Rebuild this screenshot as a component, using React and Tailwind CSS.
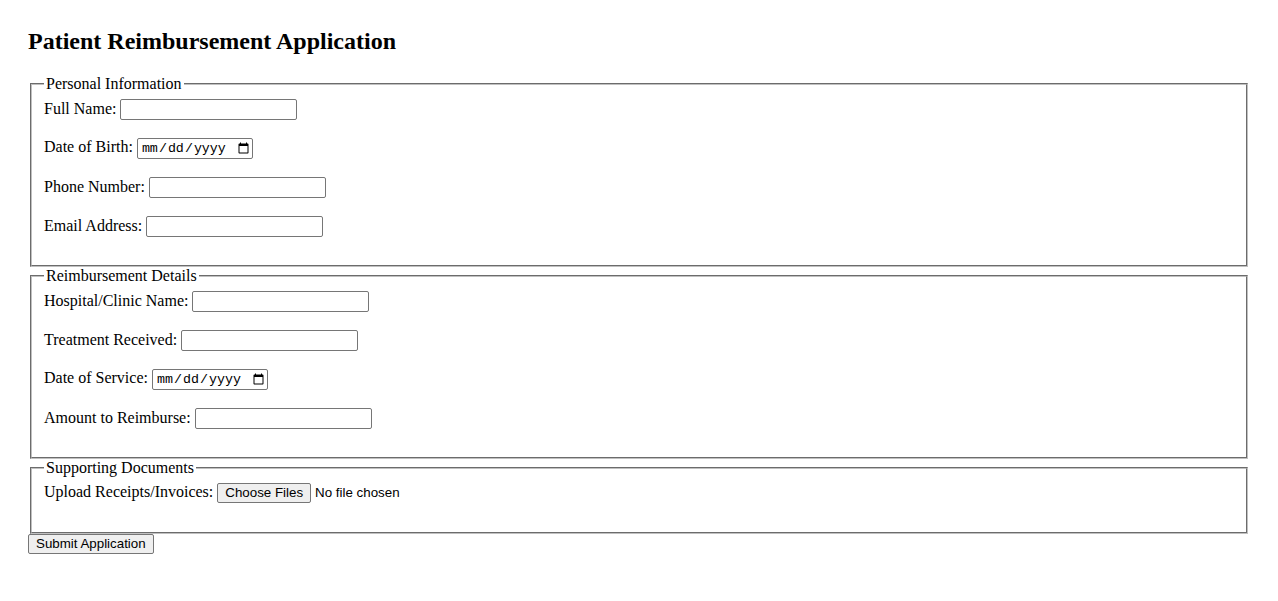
import React from "react";

function Section({ legend, children }) {
  return (
    <fieldset className="mx-[2px] border-2 [border-style:groove] border-[#c0c0c0] px-[12px] pt-[6px] pb-[10px]">
      <legend className="px-[2px] leading-[normal]">{legend}</legend>
      {children}
    </fieldset>
  );
}

function Row({ label, children }) {
  return (
    <div className="flex items-baseline gap-[4px] h-[21px] mb-[18px]">
      <label className="whitespace-nowrap leading-[normal]">{label}</label>
      {children}
    </div>
  );
}

function TextInput() {
  return (
    <input
      type="text"
      className="w-[177px] h-[21px] border border-[#767676] rounded-[2px] px-[2px] bg-white font-['Liberation_Sans',Arial,sans-serif] text-[13.33px] leading-[normal]"
    />
  );
}

function DateInput() {
  return (
    <input
      type="date"
      className="w-[116px] h-[21px] border border-[#767676] rounded-[2px] pl-[3px] pr-0 bg-white font-['Liberation_Mono','DejaVu_Sans_Mono',monospace] text-[13.33px] leading-[normal]"
    />
  );
}

export default function App() {
  return (
    <div className="min-h-screen bg-white text-black font-['Liberation_Serif','Times_New_Roman',serif] text-[16px] leading-[normal] px-[28px] pt-[28px]">
      <h2 className="text-[24px] font-bold leading-[normal] mb-[19.92px]">
        Patient Reimbursement Application
      </h2>
      <form onSubmit={(e) => e.preventDefault()}>
        <Section legend="Personal Information">
          <Row label="Full Name:">
            <TextInput />
          </Row>
          <Row label="Date of Birth:">
            <DateInput />
          </Row>
          <Row label="Phone Number:">
            <TextInput />
          </Row>
          <Row label="Email Address:">
            <TextInput />
          </Row>
        </Section>
        <Section legend="Reimbursement Details">
          <Row label="Hospital/Clinic Name:">
            <TextInput />
          </Row>
          <Row label="Treatment Received:">
            <TextInput />
          </Row>
          <Row label="Date of Service:">
            <DateInput />
          </Row>
          <Row label="Amount to Reimburse:">
            <TextInput />
          </Row>
        </Section>
        <Section legend="Supporting Documents">
          <Row label="Upload Receipts/Invoices:">
            <span className="flex items-baseline gap-[4px] font-['Liberation_Sans',Arial,sans-serif] text-[13.33px] leading-[normal]">
              <button
                type="button"
                className="h-[20px] px-[7px] border border-[#767676] rounded-[2px] bg-[#efefef] leading-[normal]"
              >
                Choose Files
              </button>
              <span>No file chosen</span>
            </span>
          </Row>
        </Section>
        <button
          type="submit"
          className="h-[20px] px-[7px] border border-[#767676] rounded-[2px] bg-[#efefef] font-['Liberation_Sans',Arial,sans-serif] text-[13.33px] leading-[normal]"
        >
          Submit Application
        </button>
      </form>
    </div>
  );
}
